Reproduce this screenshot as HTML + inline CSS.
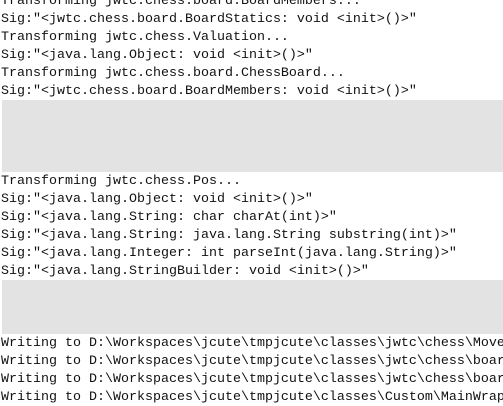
<!DOCTYPE html>
<html><head><style>
html,body{margin:0;padding:0;background:#fff;width:503px;height:400px;overflow:hidden}
.w{position:absolute;top:-8px;left:0;width:503px;overflow:hidden}
.l{height:18px;line-height:20px;padding-left:1px;font-family:"Liberation Mono",monospace;font-size:13.33px;color:#111;white-space:pre;overflow:hidden}
.g{background:#e3e3e3;margin-left:2px}
</style></head><body><div class="w">
<div class="l">Transforming jwtc.chess.board.BoardMembers...</div>
<div class="l">Sig:"&lt;jwtc.chess.board.BoardStatics: void &lt;init&gt;()&gt;"</div>
<div class="l">Transforming jwtc.chess.Valuation...</div>
<div class="l">Sig:"&lt;java.lang.Object: void &lt;init&gt;()&gt;"</div>
<div class="l">Transforming jwtc.chess.board.ChessBoard...</div>
<div class="l">Sig:"&lt;jwtc.chess.board.BoardMembers: void &lt;init&gt;()&gt;"</div>
<div class="g" style="height:72px"></div>
<div class="l">Transforming jwtc.chess.Pos...</div>
<div class="l">Sig:"&lt;java.lang.Object: void &lt;init&gt;()&gt;"</div>
<div class="l">Sig:"&lt;java.lang.String: char charAt(int)&gt;"</div>
<div class="l">Sig:"&lt;java.lang.String: java.lang.String substring(int)&gt;"</div>
<div class="l">Sig:"&lt;java.lang.Integer: int parseInt(java.lang.String)&gt;"</div>
<div class="l">Sig:"&lt;java.lang.StringBuilder: void &lt;init&gt;()&gt;"</div>
<div class="g" style="height:54px"></div>
<div class="l">Writing to D:\Workspaces\jcute\tmpjcute\classes\jwtc\chess\Move</div>
<div class="l">Writing to D:\Workspaces\jcute\tmpjcute\classes\jwtc\chess\board</div>
<div class="l">Writing to D:\Workspaces\jcute\tmpjcute\classes\jwtc\chess\board</div>
<div class="l">Writing to D:\Workspaces\jcute\tmpjcute\classes\Custom\MainWrapper</div>
</div></body></html>
